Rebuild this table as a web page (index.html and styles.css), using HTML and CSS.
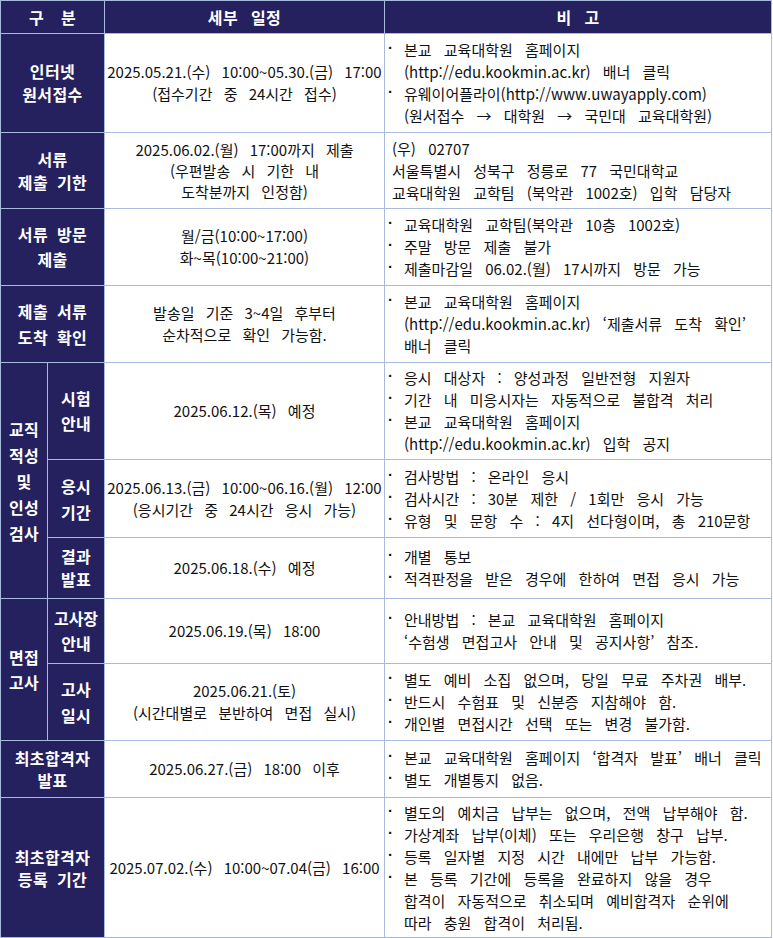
FILE: index.html
```html
<!DOCTYPE html>
<html lang="ko">
<head>
<meta charset="utf-8">
<title>일정</title>
<link rel="stylesheet" href="styles.css">
</head>
<body>
<table class="sched">
  <colgroup>
    <col class="c-a"><col class="c-b"><col class="c-mid"><col class="c-note">
  </colgroup>
  <thead>
    <tr class="r-head">
      <th colspan="2" class="wide">구 분</th>
      <th>세부 일정</th>
      <th>비 고</th>
    </tr>
  </thead>
  <tbody>
    <tr class="r1">
      <th colspan="2" class="lh23">인터넷<br>원서접수</th>
      <td class="mid">2025.05.21.(수) 10:00~05.30.(금) 17:00<br>(접수기간 중 24시간 접수)</td>
      <td class="note">
        <div class="item">본교 교육대학원 홈페이지<br>(http://edu.kookmin.ac.kr) 배너 클릭</div>
        <div class="item">유웨이어플라이(http://www.uwayapply.com)<br>(원서접수 → 대학원 → 국민대 교육대학원)</div>
      </td>
    </tr>
    <tr class="r2">
      <th colspan="2" class="lh23">서류<br>제출 기한</th>
      <td class="mid lh21">2025.06.02.(월) 17:00까지 제출<br>(우편발송 시 기한 내<br>도착분까지 인정함)</td>
      <td class="note">(우) 02707<br>서울특별시 성북구 정릉로 77 국민대학교<br>교육대학원 교학팀 (북악관 1002호) 입학 담당자</td>
    </tr>
    <tr class="r3">
      <th colspan="2">서류 방문<br>제출</th>
      <td class="mid">월/금(10:00~17:00)<br>화~목(10:00~21:00)</td>
      <td class="note">
        <div class="item">교육대학원 교학팀(북악관 10층 1002호)</div>
        <div class="item">주말 방문 제출 불가</div>
        <div class="item">제출마감일 06.02.(월) 17시까지 방문 가능</div>
      </td>
    </tr>
    <tr class="r4">
      <th colspan="2" class="lh26">제출 서류<br>도착 확인</th>
      <td class="mid">발송일 기준 3~4일 후부터<br>순차적으로 확인 가능함.</td>
      <td class="note">
        <div class="item">본교 교육대학원 홈페이지<br>(http://edu.kookmin.ac.kr) ‘제출서류 도착 확인’<br>배너 클릭</div>
      </td>
    </tr>
    <tr class="r5">
      <th rowspan="3" class="lh26">교직<br>적성<br>및<br>인성<br>검사</th>
      <th>시험<br>안내</th>
      <td class="mid">2025.06.12.(목) 예정</td>
      <td class="note">
        <div class="item">응시 대상자 : 양성과정 일반전형 지원자</div>
        <div class="item">기간 내 미응시자는 자동적으로 불합격 처리</div>
        <div class="item">본교 교육대학원 홈페이지<br>(http://edu.kookmin.ac.kr) 입학 공지</div>
      </td>
    </tr>
    <tr class="r6">
      <th class="lh26">응시<br>기간</th>
      <td class="mid">2025.06.13.(금) 10:00~06.16.(월) 12:00<br>(응시기간 중 24시간 응시 가능)</td>
      <td class="note">
        <div class="item">검사방법 : 온라인 응시</div>
        <div class="item">검사시간 : 30분 제한 / 1회만 응시 가능</div>
        <div class="item">유형 및 문항 수 : 4지 선다형이며, 총 210문항</div>
      </td>
    </tr>
    <tr class="r7">
      <th class="lh23">결과<br>발표</th>
      <td class="mid">2025.06.18.(수) 예정</td>
      <td class="note">
        <div class="item">개별 통보</div>
        <div class="item">적격판정을 받은 경우에 한하여 면접 응시 가능</div>
      </td>
    </tr>
    <tr class="r8">
      <th rowspan="2">면접<br>고사</th>
      <th class="tight">고사장<br>안내</th>
      <td class="mid">2025.06.19.(목) 18:00</td>
      <td class="note">
        <div class="item">안내방법 : 본교 교육대학원 홈페이지<br>‘수험생 면접고사 안내 및 공지사항’ 참조.</div>
      </td>
    </tr>
    <tr class="r9">
      <th class="lh26">고사<br>일시</th>
      <td class="mid">2025.06.21.(토)<br>(시간대별로 분반하여 면접 실시)</td>
      <td class="note">
        <div class="item">별도 예비 소집 없으며, 당일 무료 주차권 배부.</div>
        <div class="item">반드시 수험표 및 신분증 지참해야 함.</div>
        <div class="item">개인별 면접시간 선택 또는 변경 불가함.</div>
      </td>
    </tr>
    <tr class="r10">
      <th colspan="2" class="lh22">최초합격자<br>발표</th>
      <td class="mid">2025.06.27.(금) 18:00 이후</td>
      <td class="note">
        <div class="item">본교 교육대학원 홈페이지 ‘합격자 발표’ 배너 클릭</div>
        <div class="item">별도 개별통지 없음.</div>
      </td>
    </tr>
    <tr class="r11">
      <th colspan="2" class="lh22">최초합격자<br>등록 기간</th>
      <td class="mid">2025.07.02.(수) 10:00~07.04(금) 16:00</td>
      <td class="note">
        <div class="item">별도의 예치금 납부는 없으며, 전액 납부해야 함.</div>
        <div class="item">가상계좌 납부(이체) 또는 우리은행 창구 납부.</div>
        <div class="item">등록 일자별 지정 시간 내에만 납부 가능함.</div>
        <div class="item">본 등록 기간에 등록을 완료하지 않을 경우<br>합격이 자동적으로 취소되며 예비합격자 순위에<br>따라 충원 합격이 처리됨.</div>
      </td>
    </tr>
  </tbody>
</table>
</body>
</html>
```

FILE: styles.css
```css
html, body {
  margin: 0;
  padding: 0;
  background: #ffffff;
}

body {
  font-family: "Noto Sans CJK KR", "Noto Sans", sans-serif;
  color: #111111;
}

.sched {
  width: 771px;
  border-collapse: collapse;
  table-layout: fixed;
  font-size: 15px;
  word-spacing: 7px;
}

.c-a { width: 47px; }
.c-b { width: 57px; }
.c-mid { width: 280px; }
.c-note { width: 387px; }

.sched th,
.sched td {
  border: 1px solid #a8bbdf;
  padding: 0;
  vertical-align: middle;
}

.sched th {
  background: #25215e;
  color: #ffffff;
  font-weight: 700;
  font-size: 16px;
  line-height: 25px;
  letter-spacing: 0.4px;
  word-spacing: 4px;
  text-align: center;
  white-space: nowrap;
}

.r-head th {
  height: 32px;
  line-height: 20px;
  word-spacing: 8px;
}

.r-head th.wide {
  word-spacing: 12px;
}

.sched th.lh23 { line-height: 23px; }
.sched th.lh26 { line-height: 26px; }
.sched th.lh22 { line-height: 22px; }
.sched th.tight { letter-spacing: 0; }

.mid {
  text-align: center;
  line-height: 22px;
  white-space: nowrap;
}

.mid.lh21 { line-height: 21px; }

.note {
  text-align: left;
  line-height: 22px;
  padding-left: 7px !important;
  white-space: nowrap;
  word-spacing: 8px;
}

.item {
  display: flex;
  margin-left: -4px;
}

.item::before {
  content: "·";
  flex: none;
  width: 16px;
  word-spacing: 0;
  font-family: "Liberation Sans", sans-serif;
  font-weight: 700;
  transform: translateY(-2px);
}

.r1 { height: 99px; }
.r2 { height: 76px; }
.r3 { height: 77px; }
.r4 { height: 77px; }
.r5 { height: 97px; }
.r6 { height: 78px; }
.r7 { height: 61px; }
.r8 { height: 65px; }
.r9 { height: 77px; }
.r10 { height: 57px; }
.r11 { height: 140px; }
```
